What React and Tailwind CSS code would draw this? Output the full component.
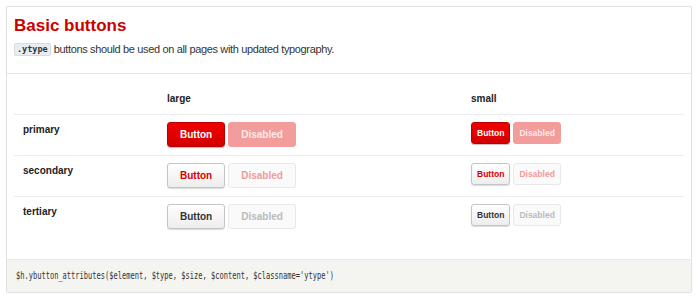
const rows = [
  { name: "primary", kind: "primary" },
  { name: "secondary", kind: "secondary" },
  { name: "tertiary", kind: "tertiary" },
];

const styles = {
  primary: {
    on: "bg-gradient-to-b from-[#f00000] to-[#d20000] border-[#b80000] text-white shadow-[0_1px_1px_rgba(0,0,0,0.25)]",
    off: "bg-[#f29c9c] border-[#f29c9c] text-[#fdeaea]",
  },
  secondary: {
    on: "bg-gradient-to-b from-white to-[#ededed] border-[#c4c4c4] text-[#d40000] shadow-[0_1px_1px_rgba(0,0,0,0.15)]",
    off: "bg-[#fafafa] border-[#e8e8e8] text-[#ef9a9a]",
  },
  tertiary: {
    on: "bg-gradient-to-b from-white to-[#ededed] border-[#c4c4c4] text-[#333] shadow-[0_1px_1px_rgba(0,0,0,0.15)]",
    off: "bg-[#fafafa] border-[#e8e8e8] text-[#bbbbbb]",
  },
};

function Btn({ kind, size, disabled, children }) {
  const s = styles[kind];
  const sz =
    size === "large"
      ? "h-[25px] px-3 text-[10px] rounded-[3px]"
      : "h-[22px] px-[5px] text-[8.5px] rounded-[3px]";
  return (
    <button
      className={`${sz} ${disabled ? s.off : s.on} border font-bold leading-none`}
    >
      {children}
    </button>
  );
}

export default function App() {
  return (
    <div className="bg-white w-[700px] h-[299px] pt-[6px] pl-[6px] font-['Liberation_Sans',Arial,sans-serif]">
      <div className="w-[686px] h-[287px] border border-[#e2e2e2] rounded-[2px] bg-white shadow-[0_0_2px_rgba(0,0,0,0.06)] flex flex-col">
        <div className="px-[7px] pt-[9px] pb-[16px] border-b border-[#e6e6e6]">
          <h1 className="text-[17px] leading-[20px] font-bold text-[#cc0000]">
            Basic buttons
          </h1>
          <p className="mt-[5px] text-[11px] tracking-[-0.35px] leading-[16px] text-[#333] flex items-center gap-[3px]">
            <code className="font-['DejaVu_Sans_Mono',monospace] text-[8.5px] tracking-normal font-bold leading-[11px] px-[2px] bg-[#e9edf2] border border-[#d6dce4] rounded-[2px] text-[#333]">
              .ytype
            </code>
            <span>buttons should be used on all pages with updated typography.</span>
          </p>
        </div>

        <div className="mx-[7px] text-[10px] text-[#222]">
          <div className="grid grid-cols-[144px_304px_1fr] border-b border-[#ececec] pt-[17px] pb-[7px] font-bold leading-[16px]">
            <div className="pl-[9px]"></div>
            <div className="pl-[9px]">large</div>
            <div className="pl-[9px]">small</div>
          </div>
          {rows.map((r, i) => (
            <div
              key={r.name}
              className={`grid grid-cols-[144px_304px_1fr] pt-[7px] pb-[8px] ${
                i < rows.length - 1 ? "border-b border-[#ececec]" : ""
              }`}
            >
              <div className="pl-[9px] font-bold leading-[16px]">{r.name}</div>
              <div className="pl-[9px] flex gap-[3px] items-start">
                <Btn kind={r.kind} size="large">Button</Btn>
                <Btn kind={r.kind} size="large" disabled>Disabled</Btn>
              </div>
              <div className="pl-[9px] flex gap-[3px] items-start">
                <Btn kind={r.kind} size="small">Button</Btn>
                <Btn kind={r.kind} size="small" disabled>Disabled</Btn>
              </div>
            </div>
          ))}
        </div>

        <div className="mt-auto h-[33px] bg-[#f4f4f1] border-t border-[#ececea] flex items-center pl-[9px] overflow-hidden">
          <span className="font-['DejaVu_Sans_Mono',monospace] text-[11px] text-[#333] whitespace-nowrap origin-left scale-x-[0.64] inline-block">
            $h.ybutton_attributes($element, $type, $size, $content, $classname='ytype')
          </span>
        </div>
      </div>
    </div>
  );
}
